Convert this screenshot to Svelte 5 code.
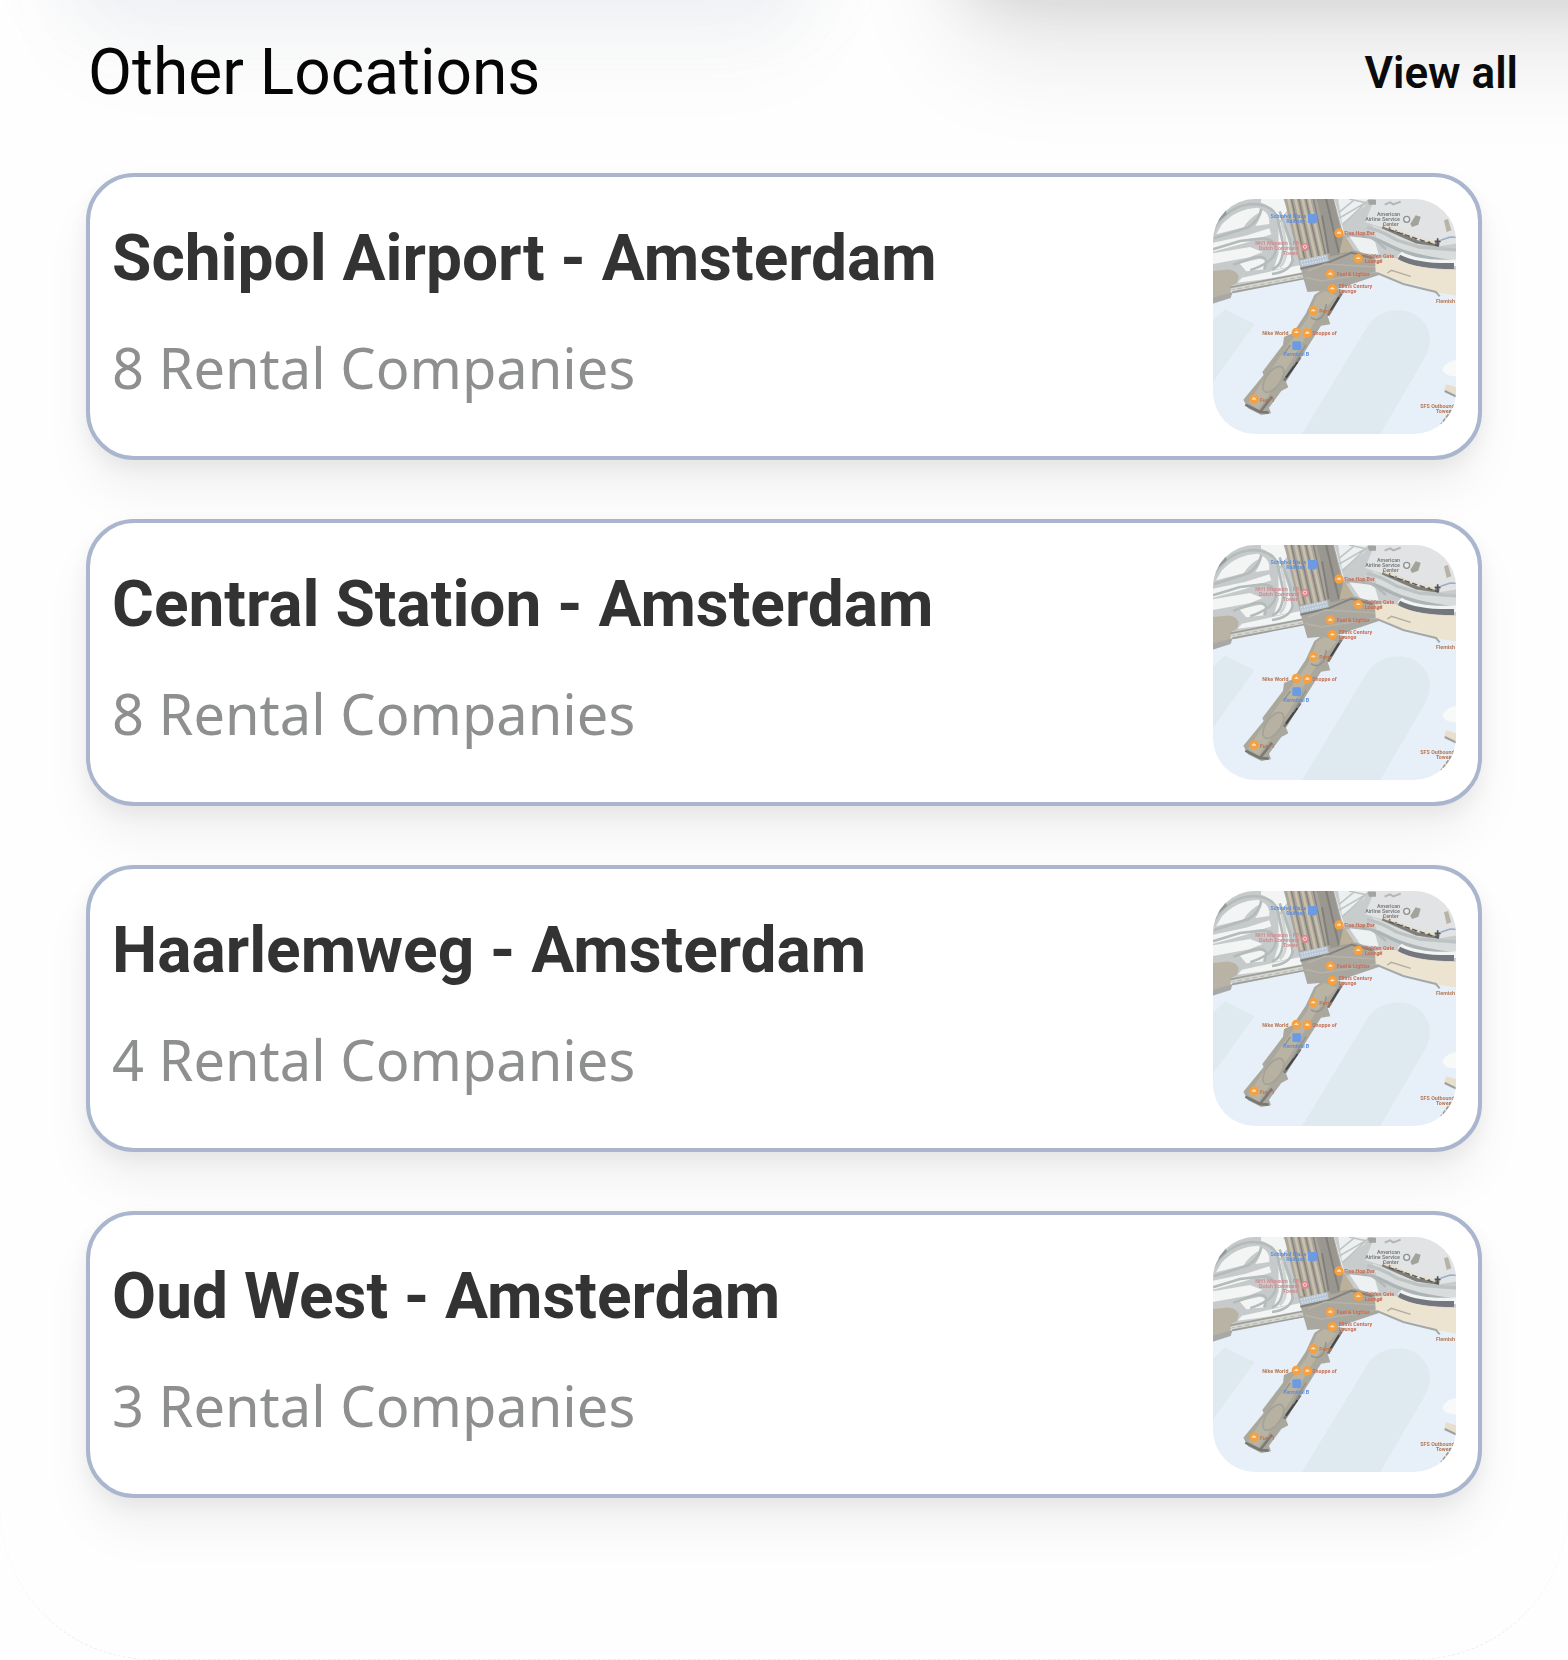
<script lang="ts">
  interface Location {
    name: string;
    companies: number;
  }

  const locations: Location[] = [
    { name: 'Schipol Airport - Amsterdam', companies: 8 },
    { name: 'Central Station - Amsterdam', companies: 8 },
    { name: 'Haarlemweg - Amsterdam', companies: 4 },
    { name: 'Oud West - Amsterdam', companies: 3 },
  ];

  const pins = [
    { x: 417, y: 129 },
    { x: 475, y: 205 },
    { x: 391, y: 252 },
    { x: 397, y: 296 },
    { x: 340, y: 362 },
    { x: 289, y: 427 },
    { x: 322, y: 429 },
    { x: 162, y: 627 },
  ];
</script>

{#snippet map()}
  <svg class="map" viewBox="39 27 729 705" preserveAspectRatio="none" aria-hidden="true">
    <rect x="39" y="27" width="729" height="705" fill="#e7f0f8" />

    <g class="ground">
      <!-- water shading -->
      <path d="M30 400L75 358L164 403L30 588Z" fill="#deeaf0" />
      <path d="M300 742L505 404Q535 362 598 361Q664 365 687 425Q697 466 672 508L535 742Z" fill="#deeaf0" />

      <!-- apron, left -->
      <path d="M30 17H300L330 235L220 262L90 298L30 285Z" fill="#c6caca" />
      <g fill="#f3f5f4">
        <path d="M66 103Q110 55 175 53L187 62Q145 85 131 112L48 133Z" />
        <path d="M184 58Q212 72 208 102L166 108Q184 83 184 58Z" />
        <path d="M39 158L137 137L208 115L214 133L133 160L39 185Z" />
        <path d="M39 190L150 171L188 186L149 202L39 222Z" />
        <path d="M118 220L180 206L204 211L192 238L139 244Z" />
        <path d="M183 27H250L263 60L240 91Q216 47 183 38Z" />
        <path d="M235 97L247 99L282 205L265 231L220 240L236 190Z" />
        <path d="M126 263L298 226L314 246L183 269L112 278Z" />
      </g>
      <g fill="none" stroke="#b4bbbb" stroke-width="8">
        <path d="M39 121Q83 46 158 42Q215 43 232 82L250 165Q250 228 216 238" />
        <path d="M41 145L145 112Q178 90 184 57" />
        <path d="M39 178L120 153L188 145Q226 147 227 180Q226 214 151 241" />
        <path d="M100 224L157 204Q191 194 199 213L193 238" />
        <path d="M239 64L270 149L278 210Q270 245 216 252" />
        <path d="M245 96L259 169Q260 215 239 232" stroke="#d0d4d3" />
      </g>
      <path d="M52 79L77 62L81 72L55 95Z" fill="#96999a" />
      <path d="M30 244L77 239Q104 237 116 258L112 278L92 289V309L30 340Z" fill="#b8b3a5" />
      <path d="M30 326L98 306L92 324L30 344Z" fill="#a8a9a6" />
      <path d="M93 288L315 245L327 263L103 310Z" fill="#d4d5d0" />
      <path d="M91 292L315 249M96 307L322 264" stroke="#9c9e99" stroke-width="5" />
      <path d="M90 301L314 259" stroke="#b8b5aa" stroke-width="3" stroke-dasharray="13 10" />

      <!-- apron, right -->
      <path d="M400 17H780V265L560 222L446 175Z" fill="#c8cccc" />
      <path d="M413 17H511L493 49L426 100Z" fill="#edf0f0" />
      <path d="M447 27L497 38L418 84M417 67L461 31M505 31L427 105" fill="none" stroke="#bfc4c4" stroke-width="5" />
      <path d="M528 17H780V159L717 169L551 114L495 96Z" fill="#e1e3e4" />
      <path d="M518 105L595 139L711 181L780 180V216L654 203L532 151Z" fill="#d8dcdc" />
      <path d="M435 137Q500 130 565 165T780 219" fill="none" stroke="#adb4b5" stroke-width="11" />
      <path d="M501 112Q545 122 592 151L658 171L780 181" fill="none" stroke="#bdc2c2" stroke-width="10" />
      <path d="M448 139L523 148L536 193L483 190Z" fill="#eef1f2" />
      <path d="M487 128L530 154L558 177" fill="none" stroke="#b3b9ba" stroke-width="7" />
      <path d="M548 109L650 154L718 164" fill="none" stroke="#817e79" stroke-width="13" />
      <path d="M552 106L656 147L713 158" fill="none" stroke="#e9dfc8" stroke-width="9" stroke-dasharray="16 5" />
      <path d="M568 119L716 168" fill="none" stroke="#545a60" stroke-width="4" stroke-dasharray="16 8" />
      <path d="M704 154H722M713 145V167" stroke="#4e555a" stroke-width="5" />
      <path d="M722 151L751 141L780 143" fill="none" stroke="#9badca" stroke-width="5" />
      <path d="M732 91L744 87L754 121L740 126Z" fill="#b7b4a7" />
      <path d="M631 101L647 76L662 80L655 104L636 111Z" fill="#a2a39a" />
      <path d="M503 29H528V44H507Z" fill="#a1a4a1" />
      <path d="M554 44L570 37L580 43L602 35" fill="none" stroke="#b3b5b6" stroke-width="6" />
      <path d="M605 185Q660 216 780 207V228Q654 231 592 199Z" fill="#f2f3f3" />
      <path d="M600 194Q657 222 762 219V237Q653 237 593 209Z" fill="#74777e" />

      <!-- terminal -->
      <path d="M250 17H399L429 130L461 180L520 198L548 251L405 299L322 306L302 235Z" fill="#aaa79f" />
      <path d="M255 17H348L384 200L301 212Z" fill="#a9a49a" />
      <g stroke="#c9bfaa" stroke-width="8">
        <path d="M263 17L305 205M284 17L326 205M305 17L347 202M325 17L367 198" />
      </g>
      <g stroke="#83827f" stroke-width="4">
        <path d="M272 17L314 205M294 17L336 204M315 17L357 200M338 17L377 197" />
      </g>
      <path d="M348 17H397L430 152L442 189L391 199Z" fill="#999790" />
      <path d="M376 17L417 190M366 76L386 190" stroke="#817f79" stroke-width="6" />
      <path d="M431 133L463 182L418 191" fill="#bbb19a" />
      <path d="M298 211L382 192L387 216L302 232Z" fill="#bac7d5" />
      <path d="M304 215L379 198M306 224L383 208" stroke="#e2edf5" stroke-width="4" stroke-dasharray="3 5" />
      <path d="M301 236L386 217L455 188L517 205" fill="none" stroke="#83827e" stroke-width="6" />
      <path d="M324 243L376 222L534 231M316 262L364 273L534 246" fill="none" stroke="#b6b2a7" stroke-width="5" />
      <path d="M525 210Q562 195 592 206Q648 240 780 239V318L717 308L658 288L600 275L527 247Z" fill="#ece3d0" />
      <path d="M409 281L533 250L610 282L708 306L719 319" fill="none" stroke="#a5a9a6" stroke-width="6" />
      <path d="M562 249L574 241L632 259" fill="none" stroke="#b3ada1" stroke-width="4" />
      <path d="M530 221L546 207" stroke="#c4b899" stroke-width="6" />

      <!-- pier -->
      <path d="M343 315L376 292L437 301L404 345L383 378L391 403L363 407L258 575L265 592L244 603L207 653L213 670L184 675L144 655L130 629L191 555L187 546L249 464L252 441L279 429L317 371Z" fill="#aaa79c" />
      <path d="M350 318L374 302L411 317L371 359L340 403L267 524L197 628L175 658L145 638L186 575L217 533L263 466L321 388Z" fill="#b9b3a4" />
      <path d="M424 311L384 377M301 502L252 572M216 620L180 666" stroke="#7c7b78" stroke-width="8" />
      <path d="M417 322L391 363M292 516L258 563" stroke="#454748" stroke-width="6" />
      <path d="M136 644L180 666L206 668" fill="none" stroke="#777875" stroke-width="8" />
      <ellipse cx="220" cy="568" rx="22" ry="45" fill="#b7b1a1" stroke="#a3a299" stroke-width="5" transform="rotate(35 220 568)" />
      <path d="M333 383Q353 398 371 374L379 342M271 465L249 496M318 464L279 527" fill="none" stroke="#969690" stroke-width="5" />

      <!-- south east corner -->
      <path d="M780 508Q733 514 727 540Q738 563 780 559Z" fill="#f8f9f9" />
      <path d="M738 583L780 595V625L733 602Z" fill="#e7decb" />
      <path d="M734 603L780 625" stroke="#9a9f9f" stroke-width="6" />
      <path d="M780 620L754 661L724 704L780 681Z" fill="#e8dfcd" />
      <path d="M755 660L723 704" stroke="#a29d91" stroke-width="6" stroke-dasharray="12 4" />
    </g>

    <g class="marks">
      <path d="M324 72H352V95L343 101L324 98Z" fill="#6c9be2" />
      <rect x="277" y="454" width="26" height="26" rx="4" fill="#6b9be3" />
      <circle cx="315" cy="171" r="12" fill="#d9898e" />
      <circle cx="315" cy="170" r="5" fill="none" stroke="#f2dddd" stroke-width="3" />
      <circle cx="620" cy="88" r="9" fill="#e8ebeb" stroke="#8c9090" stroke-width="4" />

      {#each pins as pin}
        <circle cx={pin.x} cy={pin.y} r="14" fill="#f6a040" />
        <path d="M{pin.x - 6} {pin.y}h12M{pin.x} {pin.y - 5}v5" fill="none" stroke="#fce4bd" stroke-width="4" />
      {/each}

      <g class="labels blue" text-anchor="end">
        <text x="318" y="84">Schiphol Plaza</text>
        <text x="314" y="98">Railway</text>
      </g>
      <text class="labels blue" x="289" y="498" text-anchor="middle">Terminal B</text>
      <g class="labels rose" text-anchor="end">
        <text x="297" y="164">NH1 Museum - FB</text>
        <text x="297" y="179">Dutch Command</text>
        <text x="293" y="194">Tower</text>
      </g>
      <g class="labels gray" text-anchor="end">
        <text x="600" y="77">American</text>
        <text x="600" y="93">Airline Service</text>
        <text x="596" y="108">Center</text>
      </g>
      <g class="labels red">
        <text x="433" y="136">Five Hop Bar</text>
        <text x="494" y="203">Golden Gate</text>
        <text x="494" y="218">Lounge</text>
        <text x="410" y="259">Fuel & Lighter</text>
        <text x="416" y="294">Ellin's Century</text>
        <text x="416" y="310">Lounge</text>
        <text x="337" y="436">Shoppe of</text>
      </g>
      <g class="labels brown">
        <text x="187" y="434">Nike World</text>
        <text x="358" y="370">Perry</text>
        <text x="180" y="635">Fuel 1</text>
        <text x="708" y="338">Flemish</text>
        <text x="661" y="654">SFS Outbound</text>
        <text x="708" y="670">Tower</text>
      </g>
    </g>
  </svg>
{/snippet}

<main class="screen">
  <header class="header">
    <h1>Other Locations</h1>
    <a class="view-all" href="#all">View all</a>
  </header>

  <ul class="list">
    {#each locations as location}
      <li>
        <a class="card" href="#location">
          <div class="info">
            <h2>{location.name}</h2>
            <p>{location.companies} Rental Companies</p>
          </div>
          {@render map()}
        </a>
      </li>
    {/each}
  </ul>
</main>

<style>
  :global(body) {
    background: #fefefe;
  }

  .screen {
    position: relative;
    box-sizing: border-box;
    min-height: 100vh;
    padding: 32px 50px 160px 86px;
    overflow: hidden;
    background: #fefefe;
    border-bottom: 1px dashed #ececec;
    border-radius: 0 0 152px 152px;
    font-family: Roboto, 'Liberation Sans', sans-serif;
  }

  /* shadows of the cards scrolled off above */
  .screen::before,
  .screen::after {
    content: '';
    position: absolute;
    bottom: 100%;
    height: 200px;
    border-radius: 48px;
  }

  .screen::before {
    left: 4%;
    right: 48%;
    box-shadow: 0 10px 70px rgba(190, 210, 230, 0.22), 0 60px 100px rgba(0, 0, 0, 0.03);
  }

  .screen::after {
    left: 61%;
    right: -10%;
    box-shadow: 0 0 60px rgba(0, 0, 0, 0.1), 0 50px 110px rgba(0, 0, 0, 0.1);
  }

  .header {
    position: relative;
    z-index: 1;
    display: flex;
    align-items: center;
    justify-content: space-between;
    height: 82px;
    margin-bottom: 59px;
    padding-left: 2px;
  }

  h1,
  h2,
  p {
    margin: 0;
  }

  h1 {
    font-size: 64px;
    font-weight: 400;
    line-height: 82px;
    color: #060606;
  }

  .view-all {
    font-size: 44px;
    font-weight: 600;
    line-height: 64px;
    color: #0b0b0b;
    text-decoration: none;
  }

  .list {
    position: relative;
    z-index: 1;
    display: flex;
    flex-direction: column;
    gap: 59px;
    margin: 0 36px 0 0;
    padding: 0;
    list-style: none;
  }

  .card {
    display: flex;
    justify-content: space-between;
    gap: 24px;
    padding: 22px;
    background: #fff;
    border: 4px solid #a9b6ce;
    border-radius: 48px;
    box-shadow: 0 32px 48px rgba(0, 0, 0, 0.05), 0 8px 20px rgba(0, 0, 0, 0.06);
    text-decoration: none;
  }

  .info {
    display: flex;
    flex-direction: column;
    gap: 28px;
    padding-top: 20px;
  }

  h2 {
    font-size: 64px;
    font-weight: 700;
    line-height: 80px;
    color: #333;
  }

  p {
    font-family: 'Noto Sans', 'Open Sans', sans-serif;
    font-size: 56px;
    line-height: 80px;
    color: #8e8f8f;
  }

  .map {
    flex: none;
    width: 243px;
    height: 235px;
    border-radius: 42px;
    overflow: hidden;
  }

  .ground {
    filter: blur(2px);
  }

  .marks {
    filter: blur(1px);
  }

  .labels {
    font-family: Roboto, sans-serif;
    font-size: 16px;
    font-weight: 700;
  }

  .blue {
    fill: #5d8ee0;
  }

  .rose {
    fill: #d28b91;
  }

  .gray {
    fill: #7d8280;
  }

  .red {
    fill: #cb6c52;
  }

  .brown {
    fill: #b67754;
  }
</style>
